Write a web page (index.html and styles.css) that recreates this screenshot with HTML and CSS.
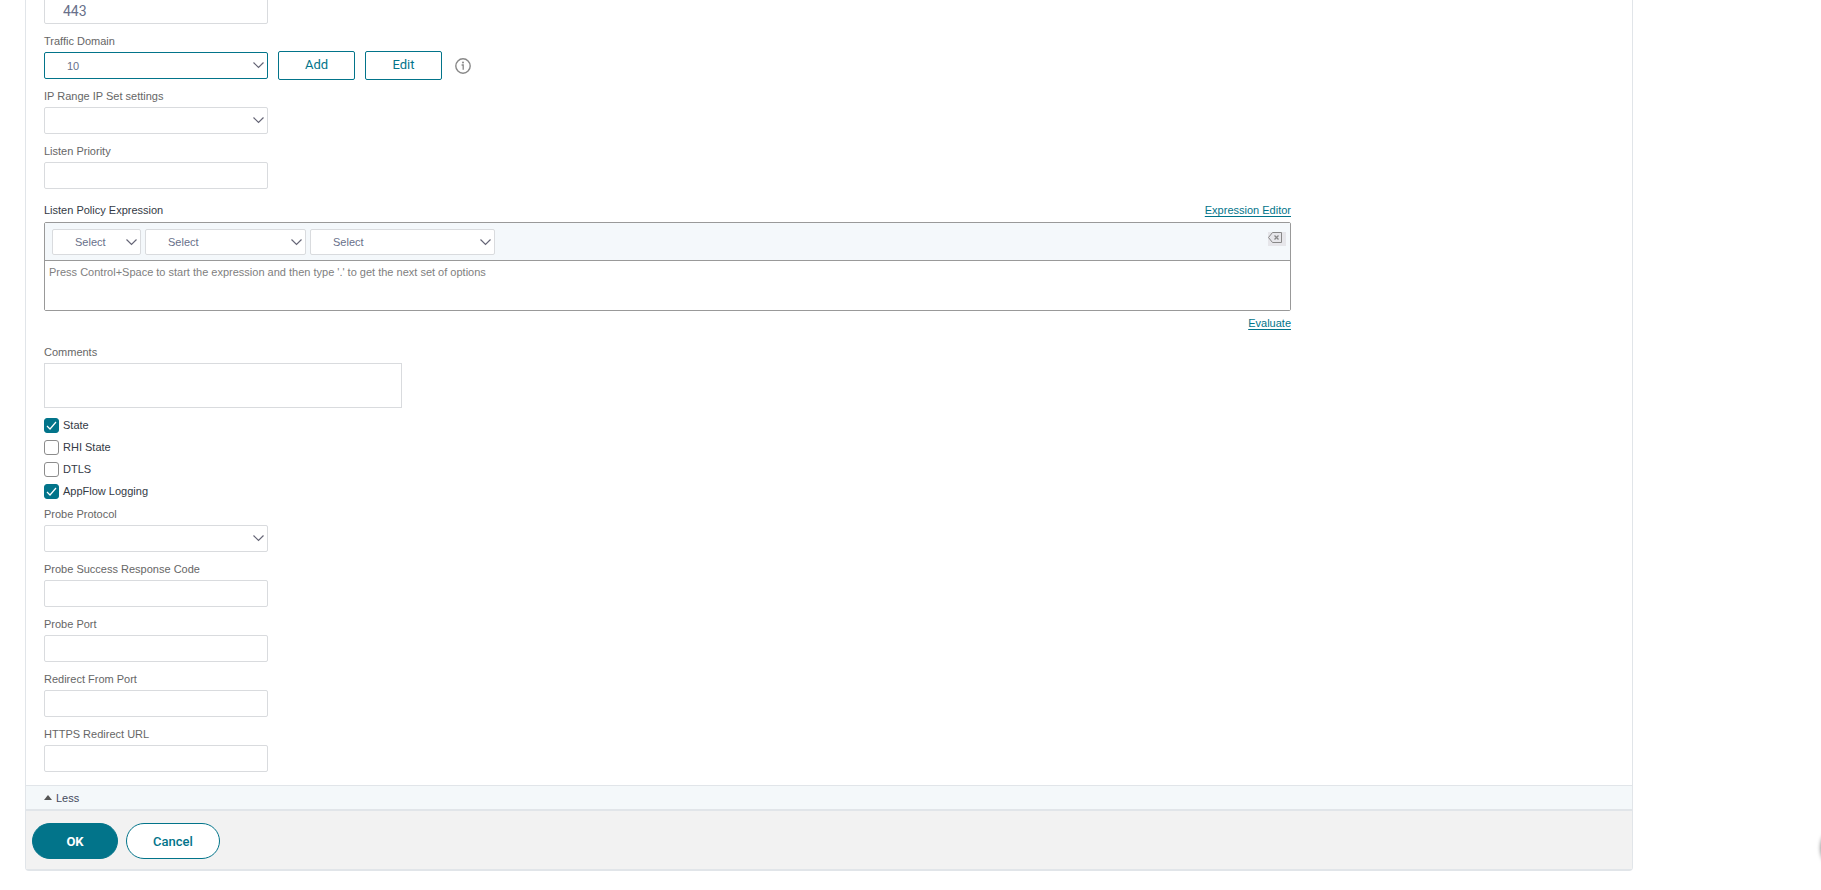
FILE: index.html
```
<!DOCTYPE html>
<html lang="en">
<head>
    <meta charset="UTF-8">
    <title>Virtual Server</title>
    <link rel="stylesheet" href="styles.css">
</head>
<body>
    <form class="panel">
        <div class="panel-body">
            <input type="text" class="control port" aria-label="Port" value="443">

            <div class="field">
                <label for="trafficDomain">Traffic Domain</label>
                <div class="field-row">
                    <select id="trafficDomain" class="control active">
                        <option>10</option>
                    </select>
                    <button type="button" class="btn-square">Add</button>
                    <button type="button" class="btn-square">Edit</button>
                    <svg class="info-icon" viewBox="0 0 16 16" width="16" height="16">
                        <circle cx="8" cy="8" r="7.2" fill="none" stroke="#888" stroke-width="1.4"/>
                        <circle cx="8" cy="4.6" r="1" fill="#888"/>
                        <path d="M6.6 7H8.2V11.8" fill="none" stroke="#888" stroke-width="1.3"/>
                    </svg>
                </div>
            </div>

            <div class="field">
                <label for="ipRange">IP Range IP Set settings</label>
                <select id="ipRange" class="control"><option></option></select>
            </div>

            <div class="field">
                <label for="listenPriority">Listen Priority</label>
                <input type="text" id="listenPriority" class="control">
            </div>

            <div class="expression">
                <div class="expression-head">
                    <label for="expression">Listen Policy Expression</label>
                    <a href="#">Expression Editor</a>
                </div>
                <div class="editor">
                    <div class="toolbar">
                        <select class="control small" aria-label="Prefix"><option>Select</option></select>
                        <select class="control medium" aria-label="Operator"><option>Select</option></select>
                        <select class="control large" aria-label="Value"><option>Select</option></select>
                        <button type="button" class="clear" aria-label="Clear">
                            <svg viewBox="0 0 14 11" width="14" height="11" fill="none" stroke="#888">
                                <path d="M4.5 0.5H13.5V10.5H4.5L0.5 5.5Z"/>
                                <path d="M6.5 3.5L10.5 7.5M10.5 3.5L6.5 7.5" stroke-width="1.3"/>
                            </svg>
                        </button>
                    </div>
                    <textarea id="expression" placeholder="Press Control+Space to start the expression and then type '.' to get the next set of options"></textarea>
                </div>
                <div class="expression-foot"><a href="#">Evaluate</a></div>
            </div>

            <div class="field comments">
                <label for="comments">Comments</label>
                <textarea id="comments"></textarea>
            </div>

            <div class="checks">
                <label><input type="checkbox" checked>State</label>
                <label><input type="checkbox">RHI State</label>
                <label><input type="checkbox">DTLS</label>
                <label><input type="checkbox" checked>AppFlow Logging</label>
            </div>

            <div class="field">
                <label for="probeProtocol">Probe Protocol</label>
                <select id="probeProtocol" class="control"><option></option></select>
            </div>

            <div class="field">
                <label for="probeCode">Probe Success Response Code</label>
                <input type="text" id="probeCode" class="control">
            </div>

            <div class="field">
                <label for="probePort">Probe Port</label>
                <input type="text" id="probePort" class="control">
            </div>

            <div class="field">
                <label for="redirectPort">Redirect From Port</label>
                <input type="text" id="redirectPort" class="control">
            </div>

            <div class="field">
                <label for="redirectUrl">HTTPS Redirect URL</label>
                <input type="text" id="redirectUrl" class="control">
            </div>
        </div>

        <button type="button" class="less"><span class="arrow"></span>Less</button>

        <div class="footer">
            <button type="submit" class="btn primary">OK</button>
            <button type="button" class="btn">Cancel</button>
        </div>
    </form>
    <div class="help-bubble"></div>
</body>
</html>
```

FILE: styles.css
```
* {
    box-sizing: border-box;
}
body {
    margin: 0;
    overflow: hidden;
    background: #fff;
    font-family: "Liberation Sans", Arial, sans-serif;
    font-size: 11px;
    line-height: 16px;
    color: #333a45;
}
input, select, textarea, button {
    font-family: inherit;
    font-size: inherit;
}
a {
    color: #02748a;
    text-underline-offset: 2px;
}
.panel {
    margin: -3px 188px 0 25px;
    border: 1px solid #e1e5e9;
    border-top: none;
    border-bottom-width: 2px;
    border-radius: 0 0 4px 4px;
}
.panel-body {
    padding: 0 18px 13px;
}
.control {
    display: block;
    width: 224px;
    height: 27px;
    padding: 0 22px;
    border: 1px solid #d9dbde;
    border-radius: 2px;
    background: #fff;
    color: #68708a;
}
select.control {
    appearance: none;
    background: #fff url("data:image/svg+xml,%3Csvg xmlns='http://www.w3.org/2000/svg' width='11' height='7' fill='none' stroke='%23667'%3E%3Cpath d='M0.5 0.5L5.5 5.5L10.5 0.5' stroke-width='1.2'/%3E%3C/svg%3E") no-repeat right 3px center;
}
.control.port {
    padding: 0 18px;
    font-family: Roboto, sans-serif;
    font-size: 14px;
}
.control.active {
    border-color: #02748a;
}
.field {
    margin-top: 9px;
}
.field label {
    display: block;
    margin-bottom: 3px;
    color: #666;
}
.field-row {
    display: flex;
    align-items: center;
    gap: 10px;
    height: 27px;
}
.btn-square {
    width: 77px;
    height: 29px;
    padding: 0 0 2px;
    border: 1px solid #02748a;
    border-radius: 2px;
    background: #fff;
    color: #02748a;
    font-family: Roboto, sans-serif;
    font-size: 13px;
}
.info-icon {
    margin-left: 3px;
}
.expression {
    width: calc(80% - 9px);
    margin-top: 13px;
}
.expression-head {
    display: flex;
    justify-content: space-between;
    margin-bottom: 4px;
}
.editor {
    border: 1px solid #999;
    border-radius: 2px;
}
.toolbar {
    display: flex;
    gap: 4px;
    padding: 6px 4px 5px 7px;
    border-bottom: 1px solid #999;
    background: #f4f8fb;
}
.toolbar .control {
    height: 26px;
}
.control.small {
    width: 89px;
}
.control.medium {
    width: 161px;
}
.control.large {
    width: 185px;
}
.clear {
    display: flex;
    width: 18px;
    height: 14px;
    margin: 3px 0 0 auto;
    padding: 0;
    border: none;
    background: #e6e6ea;
}
.editor textarea {
    display: block;
    width: 100%;
    height: 49px;
    padding: 3px 4px;
    border: none;
    resize: none;
    line-height: 16px;
}
.editor textarea::placeholder {
    color: #808080;
}
.expression-foot {
    margin-top: 4px;
    text-align: right;
}
.comments {
    margin-top: 13px;
}
.comments textarea {
    display: block;
    width: 358px;
    height: 45px;
    border: 1px solid #d9dbde;
    resize: none;
}
.checks {
    display: flex;
    flex-direction: column;
    align-items: flex-start;
    gap: 6px;
    margin: 9px 0 -2px;
}
.checks label {
    display: flex;
    align-items: center;
    gap: 4px;
}
.checks input {
    appearance: none;
    width: 15px;
    height: 15px;
    margin: 0;
    border: 1px solid #8c8c8c;
    border-radius: 3px;
    background: #fff;
}
.checks input:checked {
    border-color: #02748a;
    background: #02748a url("data:image/svg+xml,%3Csvg xmlns='http://www.w3.org/2000/svg' width='11' height='9' fill='none' stroke='%23fff'%3E%3Cpath d='M1 5L4 8L10 1' stroke-width='1.2'/%3E%3C/svg%3E") no-repeat center;
}
.less {
    display: flex;
    align-items: center;
    gap: 4px;
    width: 100%;
    height: 26px;
    padding: 0 18px;
    border: solid #e1e5e9;
    border-width: 1px 0 2px;
    background: #f4f8fa;
    color: #444a5c;
}
.arrow {
    border: 4px solid transparent;
    border-top: none;
    border-bottom: 5px solid #555;
}
.footer {
    display: flex;
    gap: 8px;
    padding: 12px 6px 10px;
    background: #f2f2f2;
}
.btn {
    min-width: 94px;
    height: 36px;
    border: 1px solid #02748a;
    border-radius: 18px;
    background: #fff;
    color: #02748a;
    font-family: Roboto, sans-serif;
    font-size: 13px;
    font-weight: 500;
}
.btn.primary {
    min-width: 86px;
    background: #02748a;
    color: #fff;
    font-weight: 700;
}
.help-bubble {
    position: fixed;
    right: -48px;
    bottom: 18px;
    width: 48px;
    height: 48px;
    border-radius: 50%;
    box-shadow: 0 0 4px rgba(0, 0, 0, 0.6);
}
```
